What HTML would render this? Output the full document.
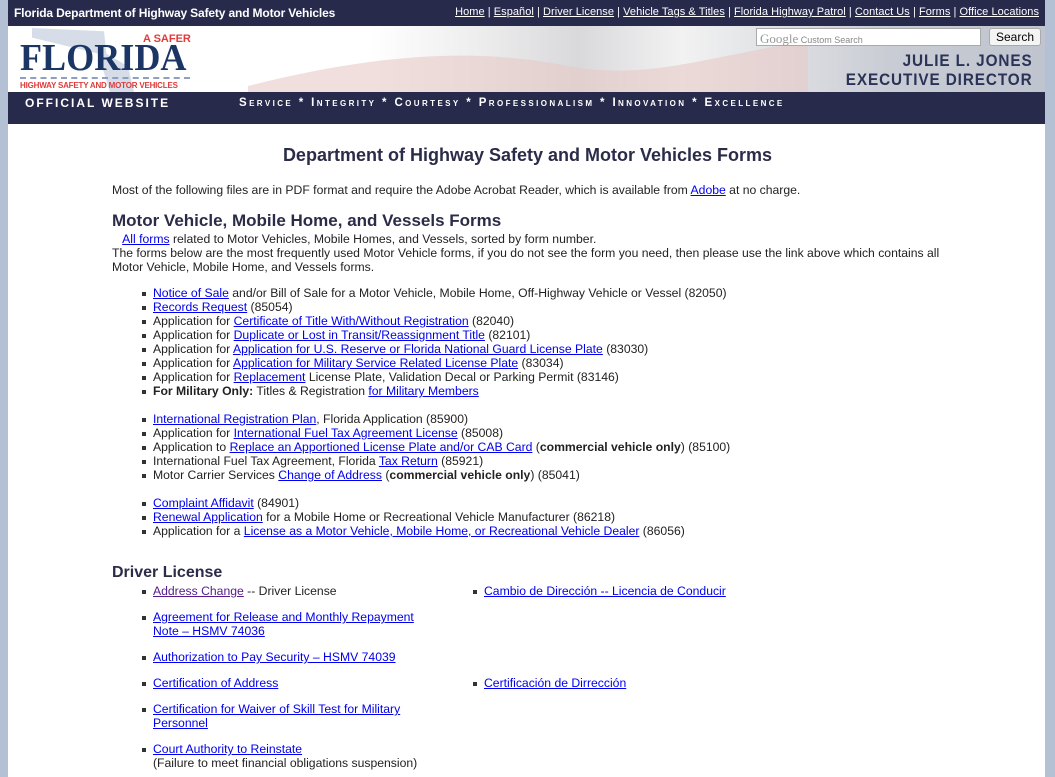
<!DOCTYPE html>
<html><head><meta charset="utf-8">
<style>
*{margin:0;padding:0;box-sizing:border-box}
body{width:1055px;height:777px;overflow:hidden;background:#b4c0d4;font-family:"Liberation Sans",Arial,sans-serif;font-size:12.2px;color:#222;position:relative}
.page{position:absolute;left:8px;top:0;width:1037px;height:777px;background:#fff}
.top{position:absolute;left:0;top:0;width:1037px;height:26px;background:#272a4b;color:#fff}
.top .t{position:absolute;left:6px;top:6px;font-weight:bold;font-size:12px;letter-spacing:-.15px}
.top .n{position:absolute;right:6px;top:6px;font-size:11px;letter-spacing:0.05px}
.top a{color:#fff}
.ban{position:absolute;left:0;top:26px;width:1037px;height:66px;background:linear-gradient(90deg,#fff 0%,#fff 35%,#eee 45%,#d9d9dc 55%,#f2f2f2 65%,#c9ccd4 85%,#bfc4ce 100%)}
.nav{position:absolute;left:0;top:92px;width:1037px;height:32px;background:#272a4b;color:#fff;font-weight:bold}
.l{position:absolute;line-height:14px;white-space:nowrap}
a{color:#0000ee;text-decoration:underline}
.b{position:absolute;width:4px;height:4px;background:#333}
h1,h2{position:absolute;color:#2a2c48;white-space:nowrap}
</style></head><body>
<div class="page">
<div class="top"><div class="t">Florida Department of Highway Safety and Motor Vehicles</div>
<div class="n"><a>Home</a> | <a>Español</a> | <a>Driver License</a> | <a>Vehicle Tags &amp; Titles</a> | <a>Florida Highway Patrol</a> | <a>Contact Us</a> | <a>Forms</a> | <a>Office Locations</a></div></div>
<div class="ban">
<svg style="position:absolute;left:240px;top:10px" width="560" height="56"><path d="M0 50 C120 20 220 10 320 30 C400 45 460 20 560 5 L560 56 L0 56Z" fill="#e8c9c6" opacity=".6"/></svg>
<div style="position:absolute;left:24px;top:2px;width:120px;height:64px;background:#c5cfe0;opacity:.7;clip-path:polygon(0 0,60% 5%,62% 40%,80% 60%,85% 100%,65% 100%,55% 40%,0 15%)"></div>
<div style="position:absolute;left:135px;top:7px;color:#e03a3a;font-weight:bold;font-size:11px">A SAFER</div>
<div style="position:absolute;left:12px;top:14px;color:#1b3565;font-family:'Liberation Serif',serif;font-weight:bold;font-size:38px;line-height:36px;transform:scaleX(.95);transform-origin:left">FLORIDA</div>
<div style="position:absolute;left:12px;top:51px;width:170px;border-top:2px dashed #8da0bf"></div>
<div style="position:absolute;left:12px;top:55px;color:#e03a3a;font-weight:bold;font-size:8px;letter-spacing:-.2px">HIGHWAY SAFETY AND MOTOR VEHICLES</div>
<div style="position:absolute;left:748px;top:2px;width:225px;height:18px;background:#fff;border:1px solid #aaa;font-size:9px;color:#888;padding:2px 3px"><span style="font-family:'Liberation Serif',serif;font-size:13px;color:#999">Google</span> Custom Search</div>
<div style="position:absolute;left:981px;top:2px;width:52px;height:18px;background:#f4f4f4;border:1px solid #aaa;border-radius:3px;font-size:12px;text-align:center;line-height:16px;color:#000">Search</div>
<div style="position:absolute;right:12px;top:25px;color:#2a3357;font-weight:bold;font-size:17px;line-height:19px;text-align:right;letter-spacing:1px;transform:scaleX(.9);transform-origin:right">JULIE L. JONES<br>EXECUTIVE DIRECTOR</div>
</div>
<div class="nav"><div style="position:absolute;left:17px;top:4px;font-size:12px;letter-spacing:2px">OFFICIAL WEBSITE</div>
<div style="position:absolute;left:231px;top:5px;font-size:11.5px;letter-spacing:2.4px;font-variant:small-caps">Service * Integrity * Courtesy * Professionalism * Innovation * Excellence</div></div>
</div>
<h1 style="left:0;width:1055px;text-align:center;top:145px;font-size:18px">Department of Highway Safety and Motor Vehicles Forms</h1>
<div class="l" style="left:112px;top:183px">Most of the following files are in PDF format and require the Adobe Acrobat Reader, which is available from <a>Adobe</a> at no charge.</div>
<h2 style="left:112px;top:211px;font-size:17px">Motor Vehicle, Mobile Home, and Vessels Forms</h2>
<div class="l" style="left:112px;top:232px">&nbsp;&nbsp;&nbsp;<a>All forms</a> related to Motor Vehicles, Mobile Homes, and Vessels, sorted by form number.</div>
<div class="l" style="left:112px;top:246px">The forms below are the most frequently used Motor Vehicle forms, if you do not see the form you need, then please use the link above which contains all</div>
<div class="l" style="left:112px;top:260px">Motor Vehicle, Mobile Home, and Vessels forms.</div>

<div class="b" style="left:142px;top:292px"></div><div class="l" style="left:153px;top:286px"><a>Notice of Sale</a> and/or Bill of Sale for a Motor Vehicle, Mobile Home, Off-Highway Vehicle or Vessel (82050)</div>
<div class="b" style="left:142px;top:306px"></div><div class="l" style="left:153px;top:300px"><a>Records Request</a> (85054)</div>
<div class="b" style="left:142px;top:320px"></div><div class="l" style="left:153px;top:314px">Application for <a>Certificate of Title With/Without Registration</a> (82040)</div>
<div class="b" style="left:142px;top:334px"></div><div class="l" style="left:153px;top:328px">Application for <a>Duplicate or Lost in Transit/Reassignment Title</a> (82101)</div>
<div class="b" style="left:142px;top:348px"></div><div class="l" style="left:153px;top:342px">Application for <a>Application for U.S. Reserve or Florida National Guard License Plate</a> (83030)</div>
<div class="b" style="left:142px;top:362px"></div><div class="l" style="left:153px;top:356px">Application for <a>Application for Military Service Related License Plate</a> (83034)</div>
<div class="b" style="left:142px;top:376px"></div><div class="l" style="left:153px;top:370px">Application for <a>Replacement</a> License Plate, Validation Decal or Parking Permit (83146)</div>
<div class="b" style="left:142px;top:390px"></div><div class="l" style="left:153px;top:384px"><b>For Military Only:</b> Titles &amp; Registration <a>for Military Members</a></div>

<div class="b" style="left:142px;top:418px"></div><div class="l" style="left:153px;top:412px"><a>International Registration Plan</a>, Florida Application (85900)</div>
<div class="b" style="left:142px;top:432px"></div><div class="l" style="left:153px;top:426px">Application for <a>International Fuel Tax Agreement License</a> (85008)</div>
<div class="b" style="left:142px;top:446px"></div><div class="l" style="left:153px;top:440px">Application to <a>Replace an Apportioned License Plate and/or CAB Card</a> (<b>commercial vehicle only</b>) (85100)</div>
<div class="b" style="left:142px;top:460px"></div><div class="l" style="left:153px;top:454px">International Fuel Tax Agreement, Florida <a>Tax Return</a> (85921)</div>
<div class="b" style="left:142px;top:474px"></div><div class="l" style="left:153px;top:468px">Motor Carrier Services <a>Change of Address</a> (<b>commercial vehicle only</b>) (85041)</div>

<div class="b" style="left:142px;top:502px"></div><div class="l" style="left:153px;top:496px"><a>Complaint Affidavit</a> (84901)</div>
<div class="b" style="left:142px;top:516px"></div><div class="l" style="left:153px;top:510px"><a>Renewal Application</a> for a Mobile Home or Recreational Vehicle Manufacturer (86218)</div>
<div class="b" style="left:142px;top:530px"></div><div class="l" style="left:153px;top:524px">Application for a <a>License as a Motor Vehicle, Mobile Home, or Recreational Vehicle Dealer</a> (86056)</div>

<h2 style="left:112px;top:564px;font-size:16px">Driver License</h2>
<div class="b" style="left:142px;top:590px"></div><div class="l" style="left:153px;top:584px"><a style="color:#551a8b">Address Change</a> -- Driver License</div>
<div class="b" style="left:473px;top:590px"></div><div class="l" style="left:484px;top:584px"><a>Cambio de Dirección -- Licencia de Conducir</a></div>
<div class="b" style="left:142px;top:616px"></div><div class="l" style="left:153px;top:610px"><a>Agreement for Release and Monthly Repayment</a><br><a>Note – HSMV 74036</a></div>
<div class="b" style="left:142px;top:656px"></div><div class="l" style="left:153px;top:650px"><a>Authorization to Pay Security – HSMV 74039</a></div>
<div class="b" style="left:142px;top:682px"></div><div class="l" style="left:153px;top:676px"><a>Certification of Address</a></div>
<div class="b" style="left:473px;top:682px"></div><div class="l" style="left:484px;top:676px"><a>Certificación de Dirrección</a></div>
<div class="b" style="left:142px;top:708px"></div><div class="l" style="left:153px;top:702px"><a>Certification for Waiver of Skill Test for Military</a><br><a>Personnel</a></div>
<div class="b" style="left:142px;top:748px"></div><div class="l" style="left:153px;top:742px"><a>Court Authority to Reinstate</a><br>(Failure to meet financial obligations suspension)</div>
</body></html>
